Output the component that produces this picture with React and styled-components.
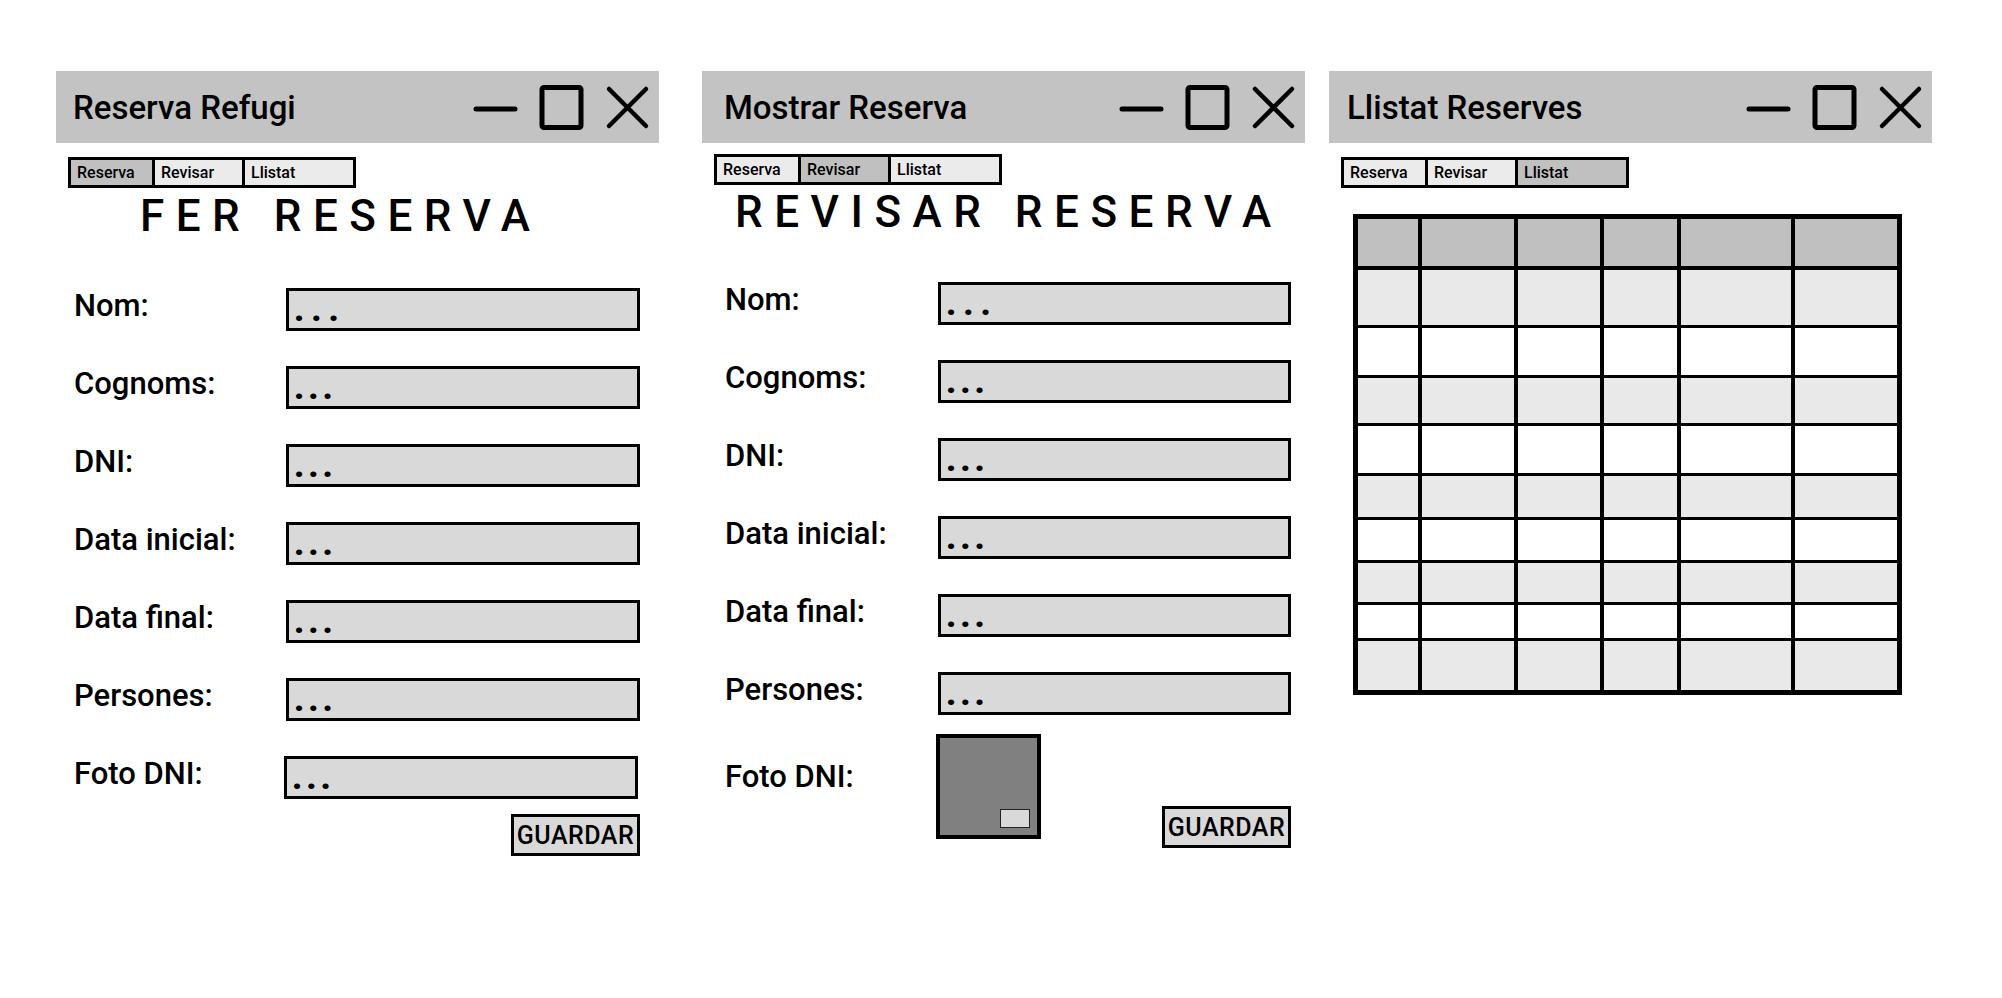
import React from 'react'
import styled, { createGlobalStyle } from 'styled-components'

const GlobalStyle = createGlobalStyle`
  body {
    margin: 0;
    background: #fff;
    font-family: Roboto, 'Liberation Sans', sans-serif;
    color: #000;
  }
`

const Page = styled.div`
  width: 2002px;
  height: 998px;
  box-sizing: border-box;
  padding: 71px 0 0 56px;
  display: flex;
  align-items: flex-start;
`

const Window = styled.section`
  width: 603px;
  margin-left: ${p => p.$ml || 0}px;
  display: flex;
  flex-direction: column;
`

const TitleBar = styled.header`
  height: 72px;
  background: #c3c3c3;
  display: flex;
  align-items: center;
  padding: 0 9px 0 ${p => p.$pl}px;
`

const Title = styled.h1`
  flex: 1;
  margin: 0;
  font-size: 33px;
  font-weight: 500;
`

const Controls = styled.div`
  display: flex;
  align-items: center;
  gap: 21px;
`

const Tabs = styled.nav`
  display: flex;
  width: 288px;
  height: 31px;
  box-sizing: border-box;
  border: 3px solid #000;
  margin: ${p => p.$mt}px 0 0 12px;
`

const Tab = styled.div`
  flex: ${p => (p.$w ? `0 0 ${p.$w}px` : '1')};
  box-sizing: border-box;
  background: ${p => (p.$active ? '#c0c0c0' : '#ebebeb')};
  border-left: ${p => (p.$first ? 'none' : '3px solid #000')};
  display: flex;
  align-items: center;
  padding-left: 6px;
  font-size: 16px;
  font-weight: 500;
`

const Heading = styled.h2`
  margin: ${p => p.$mt}px 0 0;
  padding-left: ${p => p.$pl}px;
  font-size: 44px;
  line-height: 44px;
  font-weight: 500;
  letter-spacing: 11.5px;
  white-space: nowrap;
`

const Form = styled.div`
  display: flex;
  flex-direction: column;
  gap: 35px;
  width: 566px;
  margin-top: ${p => p.$mt}px;
  margin-left: ${p => p.$pl}px;
`

const Row = styled.div`
  display: flex;
  align-items: ${p => (p.$top ? 'flex-start' : 'center')};
  margin-top: ${p => p.$mt || 0}px;
`

const Label = styled.label`
  flex: 0 0 ${p => p.$w}px;
  font-size: 31px;
  line-height: 34px;
  font-weight: 500;
  padding: ${p => (p.$top ? '26px 0 0' : '0 0 8px')};
`

const Field = styled.div`
  width: 354px;
  height: 43px;
  box-sizing: border-box;
  border: 3px solid #000;
  background: #d9d9d9;
  display: flex;
  align-items: flex-end;
  padding: 0 0 2px 5px;
  font-size: 34px;
  line-height: 34px;
  font-weight: 900;
  letter-spacing: ${p => p.$spread || 4}px;
`

const Actions = styled.div`
  display: flex;
  justify-content: flex-end;
  margin-top: -20px;
`

const Button = styled.button`
  width: 129px;
  height: 42px;
  box-sizing: border-box;
  border: 3px solid #000;
  background: #d9d9d9;
  font-family: Roboto, 'Liberation Sans', sans-serif;
  font-size: 25px;
  font-weight: 500;
  letter-spacing: 0.5px;
  padding: 0;
  color: #000;
  margin-top: ${p => p.$mt || 0}px;
  margin-left: auto;
`

const Photo = styled.div`
  position: relative;
  width: 105px;
  height: 105px;
  box-sizing: border-box;
  border: 4px solid #000;
  background: #808080;
`

const PhotoBadge = styled.span`
  position: absolute;
  right: 7px;
  bottom: 7px;
  width: 30px;
  height: 19px;
  box-sizing: border-box;
  border: 1px solid #222;
  background: #d9d9d9;
`

const Grid = styled.div`
  display: grid;
  grid-template-columns: 60px 92px 82px 73px 110px 102px;
  grid-template-rows: ${p => p.$rows};
  column-gap: 4px;
  row-gap: 3px;
  width: fit-content;
  background: #000;
  border: 5px solid #000;
  margin: 26px 0 0 24px;
`

const Cell = styled.div`
  background: ${p => (p.$kind === 'head' ? '#c0c0c0' : p.$kind === 'shade' ? '#e9e9e9' : '#fff')};
  margin-bottom: ${p => (p.$kind === 'head' ? 1 : 0)}px;
`

function WindowControls() {
  return (
    <Controls>
      <svg width="45" height="45" viewBox="0 0 45 45">
        <line x1="3" y1="24" x2="42" y2="24" stroke="#000" strokeWidth="5" strokeLinecap="round" />
      </svg>
      <svg width="45" height="45" viewBox="0 0 45 45">
        <rect x="3" y="2.5" width="39" height="40" rx="2" fill="none" stroke="#000" strokeWidth="5" />
      </svg>
      <svg width="45" height="45" viewBox="0 0 45 45">
        <path d="M4 4 L41 41 M41 4 L4 41" stroke="#000" strokeWidth="4.5" strokeLinecap="round" />
      </svg>
    </Controls>
  )
}

function TabStrip({ active, mt }) {
  return (
    <Tabs $mt={mt}>
      <Tab $first $w={81} $active={active === 0}>Reserva</Tab>
      <Tab $w={90} $active={active === 1}>Revisar</Tab>
      <Tab $active={active === 2}>Llistat</Tab>
    </Tabs>
  )
}

const fields = ['Nom:', 'Cognoms:', 'DNI:', 'Data inicial:', 'Data final:', 'Persones:']

const rowHeights = [48, 55, 47, 45, 47, 41, 40, 39, 33, 49]

export default function App() {
  return (
    <>
      <GlobalStyle />
      <Page>
        <Window>
          <TitleBar $pl={17}>
            <Title>Reserva Refugi</Title>
            <WindowControls />
          </TitleBar>
          <TabStrip active={0} mt={14} />
          <Heading $mt={6} $pl={84}>FER RESERVA</Heading>
          <Form $mt={50} $pl={18}>
            {fields.map((f, i) => (
              <Row key={f}>
                <Label $w={212}>{f}</Label>
                <Field $spread={i === 0 ? 7 : 4}>...</Field>
              </Row>
            ))}
            <Row>
              <Label $w={210}>Foto DNI:</Label>
              <Field>...</Field>
            </Row>
            <Actions>
              <Button>GUARDAR</Button>
            </Actions>
          </Form>
        </Window>

        <Window $ml={43}>
          <TitleBar $pl={22}>
            <Title>Mostrar Reserva</Title>
            <WindowControls />
          </TitleBar>
          <TabStrip active={1} mt={11} />
          <Heading $mt={5} $pl={33}>REVISAR RESERVA</Heading>
          <Form $mt={48} $pl={23}>
            {fields.map((f, i) => (
              <Row key={f}>
                <Label $w={213}>{f}</Label>
                <Field $spread={i === 0 ? 7 : 4}>...</Field>
              </Row>
            ))}
            <Row $top $mt={-16}>
              <Label $w={211} $top>Foto DNI:</Label>
              <Photo><PhotoBadge /></Photo>
              <Button $mt={72}>GUARDAR</Button>
            </Row>
          </Form>
        </Window>

        <Window $ml={24}>
          <TitleBar $pl={18}>
            <Title>Llistat Reserves</Title>
            <WindowControls />
          </TitleBar>
          <TabStrip active={2} mt={14} />
          <Grid $rows={rowHeights.map(h => h + 'px').join(' ')}>
            {rowHeights.map((_, r) =>
              [0, 1, 2, 3, 4, 5].map(c => (
                <Cell key={r + '-' + c} $kind={r === 0 ? 'head' : r % 2 ? 'shade' : 'plain'} />
              ))
            )}
          </Grid>
        </Window>
      </Page>
    </>
  )
}
